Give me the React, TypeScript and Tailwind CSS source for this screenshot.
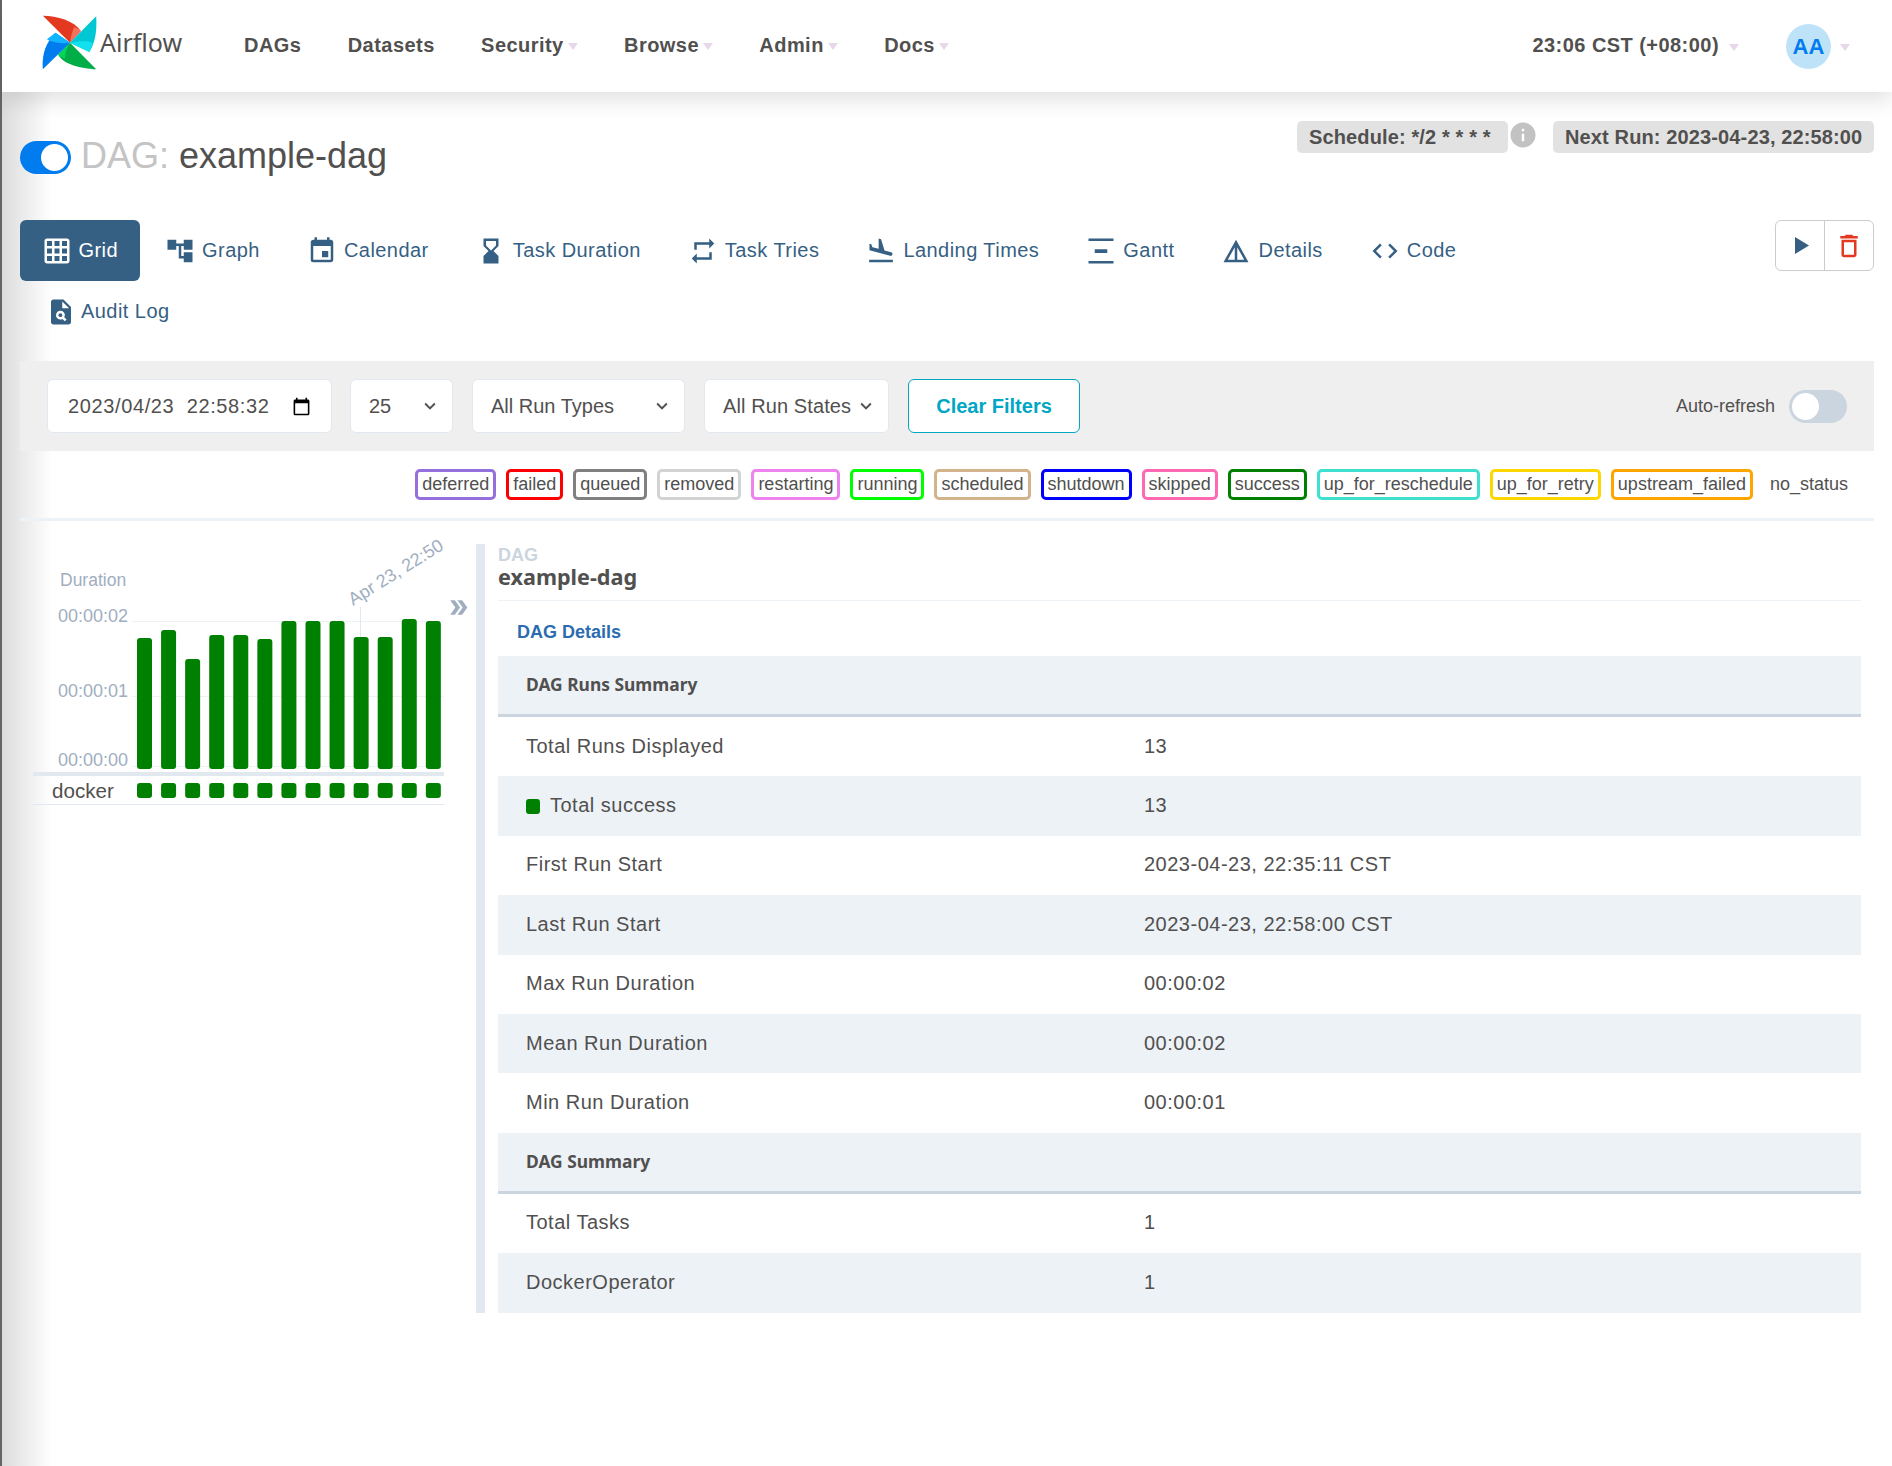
import { ReactNode } from 'react'
import {
    MdGridOn,
    MdAccountTree,
    MdEvent,
    MdHourglassBottom,
    MdRepeat,
    MdFlightLand,
    MdVerticalDistribute,
    MdDetails,
    MdCode,
    MdPlagiarism,
    MdDeleteOutline,
    MdDoubleArrow,
    MdInfo,
    MdCalendarToday,
    MdKeyboardArrowDown,
} from 'react-icons/md'

const TABS = [
    { label: 'Grid', icon: <MdGridOn size={30} />, active: true },
    { label: 'Graph', icon: <MdAccountTree size={30} /> },
    { label: 'Calendar', icon: <MdEvent size={30} /> },
    { label: 'Task Duration', icon: <MdHourglassBottom size={30} /> },
    { label: 'Task Tries', icon: <MdRepeat size={30} /> },
    { label: 'Landing Times', icon: <MdFlightLand size={30} /> },
    { label: 'Gantt', icon: <MdVerticalDistribute size={30} /> },
    { label: 'Details', icon: <MdDetails size={30} /> },
    { label: 'Code', icon: <MdCode size={30} /> },
    { label: 'Audit Log', icon: <MdPlagiarism size={30} />, audit: true },
]

const STATES = [
    { label: 'deferred', border: 'border-[#9370db]' },
    { label: 'failed', border: 'border-[#ff0000]' },
    { label: 'queued', border: 'border-[#808080]' },
    { label: 'removed', border: 'border-[#d3d3d3]' },
    { label: 'restarting', border: 'border-[#ee82ee]' },
    { label: 'running', border: 'border-[#00ff00]' },
    { label: 'scheduled', border: 'border-[#d2b48c]' },
    { label: 'shutdown', border: 'border-[#0000ff]' },
    { label: 'skipped', border: 'border-[#ff69b4]' },
    { label: 'success', border: 'border-[#008000]' },
    { label: 'up_for_reschedule', border: 'border-[#40e0d0]' },
    { label: 'up_for_retry', border: 'border-[#ffd700]' },
    { label: 'upstream_failed', border: 'border-[#ffa500]' },
]

const BAR_HEIGHTS = [131, 139, 110, 134, 134, 130, 148, 148, 148, 132, 132, 150, 148]

function Caret() {
    return <span className="ml-[4px] mt-[3px] inline-block border-x-[5.5px] border-t-[7px] border-x-transparent border-t-[#e6d8e8]" />
}

function Logo() {
    return (
        <svg width="55" height="55" viewBox="66 43 161 162" className="shrink-0">
            <path d="M68 45C110 45 160 60 180 90L148 125Z" fill="#e43921" />
            <path d="M148 125C150 105 155 92 160 78C170 82 176 86 180 90Z" fill="#f4725b" />
            <path d="M225 47C228 90 222 125 205 152L148 125Z" fill="#00c7d4" />
            <path d="M148 125C170 120 190 118 215 125C212 135 209 144 205 152Z" fill="#11e1ee" />
            <path d="M225 203C180 200 130 190 113 160L148 125Z" fill="#00ad46" />
            <path d="M148 125C140 140 135 150 133 172C125 168 118 165 113 160Z" fill="#04d659" />
            <path d="M68 203C65 165 72 130 105 95L148 125Z" fill="#017cee" />
            <path d="M148 125C125 128 100 125 80 115C87 108 96 102 105 95Z" fill="#11b5ff" />
        </svg>
    )
}

function NavItem({ label, caret }: { label: string; caret?: boolean }) {
    return (
        <div className="mb-[2px] flex items-center text-[20px] font-bold tracking-[0.46px]">
            <span>{label}</span>
            {caret && <Caret />}
        </div>
    )
}

function FilterBox({ className, children }: { className: string; children: ReactNode }) {
    return (
        <div className={`flex h-[54px] items-center rounded-[6px] border border-[#e2e8f0] bg-white text-[20px] ${className}`}>
            {children}
        </div>
    )
}

function Chart() {
    const xs = BAR_HEIGHTS.map((_, i) => 137 + i * 24.07)
    return (
        <svg width="456" height="300" viewBox="20 544 456 300" className="overflow-visible font-['Liberation_Sans',sans-serif]">
            <text x="60" y="586" fontSize="17.5" fill="#a0aec0">Duration</text>
            <text x="58" y="622" fontSize="18" fill="#a0aec0">00:00:02</text>
            <text x="58" y="697" fontSize="18" fill="#a0aec0">00:00:01</text>
            <text x="58" y="766" fontSize="18" fill="#a0aec0">00:00:00</text>
            <line x1="132" x2="444" y1="621.5" y2="621.5" stroke="#edf2f7" />
            <line x1="132" x2="444" y1="696.5" y2="696.5" stroke="#edf2f7" />
            <line x1="132" x2="444" y1="766.5" y2="766.5" stroke="#edf2f7" />
            <line x1="360.5" x2="360.5" y1="607" y2="640" stroke="#e2e8f0" />
            <text x="0" y="0" fontSize="18" fill="#a0aec0" transform="translate(353 606) rotate(-32)">Apr 23, 22:50</text>
            {BAR_HEIGHTS.map((h, i) => (
                <rect key={i} x={xs[i]} y={769 - h} width="15" height={h} rx="3" fill="#008000" />
            ))}
            <rect x="33" y="772" width="411" height="4" fill="#e2e8f0" />
            <text x="52" y="798" fontSize="20.6" fill="#51504f">docker</text>
            {xs.map((x, i) => (
                <rect key={i} x={x} y="783" width="15" height="15" rx="3" fill="#008000" />
            ))}
            <line x1="33" x2="444" y1="804.5" y2="804.5" stroke="#e2e8f0" />
        </svg>
    )
}

function SummaryHead({ label }: { label: string }) {
    return (
        <div className="flex h-[61px] items-center border-b-[3px] border-[#cbd5e0] bg-[#edf2f7] pb-[2px] pl-[28px] font-['Noto_Sans',sans-serif] text-[17.4px] font-bold">
            {label}
        </div>
    )
}

function SummaryRow({ label, value, striped, square }: { label: string; value: string; striped?: boolean; square?: boolean }) {
    return (
        <div className={`flex h-[59.4px] items-center pb-[2px] text-[20px] tracking-[0.5px] ${striped ? 'bg-[#edf2f7]' : ''}`}>
            <div className="flex w-[646px] items-center pl-[28px]">
                {square && <span className="mr-[10px] mt-[2px] h-[15px] w-[14px] rounded-[3px] bg-[#008000]" />}
                {label}
            </div>
            <div>{value}</div>
        </div>
    )
}

export default function App() {
    return (
        <div className="min-h-[1466px] border-l-2 border-[#666666] bg-[linear-gradient(to_right,#dcdcdc,#ffffff_50px)] font-['Liberation_Sans',sans-serif] text-[#51504f]">
            <nav className="relative flex h-[92px] items-center bg-white pl-[40px] pr-[42px] shadow-[0_8px_20px_rgba(0,0,0,0.12)]">
                <div className="mb-[7px] flex w-[202px] items-center">
                    <Logo />
                    <span className="ml-[3px] font-['Noto_Sans',sans-serif] text-[25px] leading-none">Airflow</span>
                </div>
                <div className="flex items-center gap-[46.3px]">
                    <NavItem label="DAGs" />
                    <NavItem label="Datasets" />
                    <NavItem label="Security" caret />
                    <NavItem label="Browse" caret />
                    <NavItem label="Admin" caret />
                    <NavItem label="Docs" caret />
                </div>
                <div className="ml-auto flex items-center">
                    <span className="mb-[2px] text-[20px] font-bold tracking-[0.45px]">23:06 CST (+08:00)</span>
                    <span className="ml-[6px]"><Caret /></span>
                    <div className="ml-[47px] flex h-[45px] w-[45px] items-center justify-center rounded-full bg-[#bee3f8] text-[22px] font-bold text-[#017cee]">AA</div>
                    <span className="ml-[5px]"><Caret /></span>
                </div>
            </nav>

            <main className="pl-[18px] pr-[18px]">
                <div className="flex h-[128px] justify-between">
                    <div className="mt-[49px] flex h-[33px] items-center">
                        <div className="flex h-[33px] w-[51px] items-center justify-end rounded-full bg-[#017cee] p-[3px]">
                            <span className="h-[27px] w-[27px] rounded-full bg-white" />
                        </div>
                        <h1 className="mb-[4px] ml-[10px] text-[36px] leading-none">
                            <span className="text-[#c4c4c4]">DAG: </span>example-dag
                        </h1>
                    </div>
                    <div className="mt-[29px] flex h-[32px] items-start text-[20px] font-bold tracking-[0.13px]">
                        <div className="flex h-[32px] w-[211px] items-center rounded-[5px] bg-[#e2e2e2] pl-[12px]">Schedule: */2 * * * *</div>
                        <MdInfo size={30} className="mt-[-1px] text-[#c2c2c2]" />
                        <div className="ml-[15px] flex h-[32px] w-[321px] items-center rounded-[5px] bg-[#e2e2e2] pl-[12px]">Next Run: 2023-04-23, 22:58:00</div>
                    </div>
                </div>

                <div className="flex justify-between">
                    <div className="flex w-[1480px] flex-wrap gap-x-[4px] text-[20px] tracking-[0.45px] text-[#365f84]">
                        {TABS.map((tab) => (
                            <div
                                key={tab.label}
                                className={`flex h-[61px] items-center rounded-[6px] ${tab.audit ? 'gap-[5px] pl-[26px] pr-[22px]' : 'gap-[7px] px-[21.5px]'} ${tab.active ? 'bg-[#365f84] text-white' : ''}`}
                            >
                                {tab.icon}
                                <span className="mb-[2px]">{tab.label}</span>
                            </div>
                        ))}
                    </div>
                    <div className="flex h-[51px] w-[99px] rounded-[6px] border border-[#cccccc]">
                        <div className="flex w-[49px] items-center justify-center border-r border-[#cccccc] pl-[3px] text-[#365f84]">
                            <svg width="14" height="17" viewBox="0 0 14 17">
                                <polygon points="0,0 14,8.5 0,17" fill="currentColor" />
                            </svg>
                        </div>
                        <div className="flex flex-1 items-center justify-center text-[#e43921]">
                            <MdDeleteOutline size={30} />
                        </div>
                    </div>
                </div>

                <div className="mt-[19px] flex h-[90px] items-center bg-[#efefef] pl-[27px] pr-[27px]">
                    <FilterBox className="w-[285px] justify-between pl-[20px] pr-[20px] tracking-[0.62px]">
                        <span>2023/04/23&nbsp;&nbsp;22:58:32</span>
                        <MdCalendarToday size={19} className="text-black" />
                    </FilterBox>
                    <FilterBox className="ml-[18px] w-[103px] justify-between pl-[18px] pr-[11px]">
                        <span>25</span>
                        <MdKeyboardArrowDown size={22} />
                    </FilterBox>
                    <FilterBox className="ml-[19px] w-[213px] justify-between pl-[18px] pr-[11px]">
                        <span>All Run Types</span>
                        <MdKeyboardArrowDown size={22} />
                    </FilterBox>
                    <FilterBox className="ml-[19px] w-[185px] justify-between pl-[18px] pr-[11px] tracking-[0.1px]">
                        <span>All Run States</span>
                        <MdKeyboardArrowDown size={22} />
                    </FilterBox>
                    <div className="ml-[19px] flex h-[54px] w-[172px] items-center justify-center rounded-[6px] border border-[#00a7c4] bg-white text-[20px] font-bold text-[#00a7c4]">
                        Clear Filters
                    </div>
                    <span className="ml-auto text-[18px]">Auto-refresh</span>
                    <div className="ml-[14px] flex h-[33px] w-[58px] items-center rounded-full bg-[#cbd5e0] p-[3px]">
                        <span className="h-[27px] w-[27px] rounded-full bg-white" />
                    </div>
                </div>

                <div className="flex h-[70px] items-center justify-end gap-[10px] border-b-[3px] border-[#edf2f7] pr-[26px] text-[18px]">
                    {STATES.map((s) => (
                        <span key={s.label} className={`flex h-[31px] items-center rounded-[5px] border-[3px] px-[4px] ${s.border}`}>
                            {s.label}
                        </span>
                    ))}
                    <span className="ml-[7px]">no_status</span>
                </div>

                <div className="relative mt-[23px] flex">
                    <div className="w-[456px]">
                        <Chart />
                    </div>
                    <MdDoubleArrow size={25} className="absolute left-[426px] top-[51px] text-[#a0aec0]" />
                    <div className="w-[9px] bg-[#e2e8f0]" />
                    <div className="ml-[13px] w-[1363px]">
                        <div className="h-[57px] border-b border-[#edf2f7]">
                            <div className="text-[18px] font-bold leading-[22px] text-[#cbd5e0]">DAG</div>
                            <div className="font-['Noto_Sans',sans-serif] text-[21.6px] font-bold leading-[22px]">example-dag</div>
                        </div>
                        <div className="flex h-[55px] items-center pl-[19px] pt-[7px] text-[18px] font-bold text-[#2b6cb0]">DAG Details</div>
                        <SummaryHead label="DAG Runs Summary" />
                        <SummaryRow label="Total Runs Displayed" value="13" />
                        <SummaryRow label="Total success" value="13" striped square />
                        <SummaryRow label="First Run Start" value="2023-04-23, 22:35:11 CST" />
                        <SummaryRow label="Last Run Start" value="2023-04-23, 22:58:00 CST" striped />
                        <SummaryRow label="Max Run Duration" value="00:00:02" />
                        <SummaryRow label="Mean Run Duration" value="00:00:02" striped />
                        <SummaryRow label="Min Run Duration" value="00:00:01" />
                        <SummaryHead label="DAG Summary" />
                        <SummaryRow label="Total Tasks" value="1" />
                        <SummaryRow label="DockerOperator" value="1" striped />
                    </div>
                </div>
            </main>
        </div>
    )
}
